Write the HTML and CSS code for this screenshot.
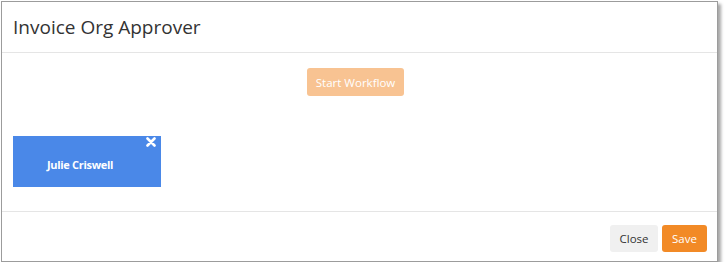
FILE: index.html
```html
<!DOCTYPE html>
<html>
<head>
<meta charset="utf-8">
<link rel="stylesheet" href="styles.css">
</head>
<body>
<div class="modal">
  <div class="modal-header">
    <h4 class="modal-title">Invoice Org Approver</h4>
  </div>
  <div class="modal-body">
    <div class="workflow-row">
      <button class="btn btn-start" disabled>Start Workflow</button>
    </div>
    <div class="approver-card">
      <span class="approver-name">Julie Criswell</span>
      <svg class="remove-icon" viewBox="0 0 10 10" width="10" height="10" aria-hidden="true">
        <path d="M1.5 1.5 L8.5 8.5 M8.5 1.5 L1.5 8.5" stroke="#fff" stroke-width="2.6" stroke-linecap="round"/>
      </svg>
    </div>
  </div>
  <div class="modal-footer">
    <button class="btn btn-close">Close</button>
    <button class="btn btn-save">Save</button>
  </div>
</div>
</body>
</html>
```
FILE: styles.css
```css
html, body {
  margin: 0;
  padding: 0;
  background: #ffffff;
}
body {
  font-family: "Open Sans", "Liberation Sans", sans-serif;
  color: #333333;
}
.modal {
  margin: 1px 0 0 1px;
  width: 715px;
  height: 259px;
  border: 1px solid #9c9c9c;
  box-shadow: 3px 3px 3px rgba(0, 0, 0, 0.35);
  background: #ffffff;
  display: flex;
  flex-direction: column;
}
.modal-header {
  height: 51px;
  box-sizing: border-box;
  padding: 0 11px;
  display: flex;
  align-items: center;
  border-bottom: 1px solid #e5e5e5;
}
.modal-title {
  margin: 0;
  font-size: 19px;
  font-weight: 400;
  line-height: 24px;
  color: #333333;
}
.modal-body {
  flex: 1;
  padding: 15px 11px 0 11px;
}
.workflow-row {
  display: flex;
  justify-content: center;
  padding-right: 8px;
}
.btn {
  font-family: "Open Sans", "Liberation Sans", sans-serif;
  font-size: 11.5px;
  border: none;
  border-radius: 3px;
  height: 27px;
  padding: 0 9px;
  cursor: pointer;
}
.btn-start {
  background: #f8c392;
  color: #ffffff;
  width: 97px;
  height: 28px;
  padding: 0;
}
.approver-card {
  position: relative;
  margin-top: 40px;
  width: 148px;
  height: 51px;
  background: #4a88e8;
  box-sizing: border-box;
  padding: 5px 14px 0 0;
  display: flex;
  align-items: center;
  justify-content: center;
}
.approver-name {
  color: #ffffff;
  font-size: 11px;
  font-weight: 700;
  letter-spacing: -0.3px;
}
.remove-icon {
  position: absolute;
  top: 1px;
  right: 5px;
}
.modal-footer {
  height: 50px;
  box-sizing: border-box;
  border-top: 1px solid #e5e5e5;
  display: flex;
  justify-content: flex-end;
  align-items: center;
  gap: 4px;
  padding: 3px 10px 0 0;
}
.btn-close {
  background: #f0f0f0;
  color: #333333;
  width: 48px;
  padding: 0;
}
.btn-save {
  background: #f28a26;
  color: #ffffff;
  width: 45px;
  padding: 0;
}
```
